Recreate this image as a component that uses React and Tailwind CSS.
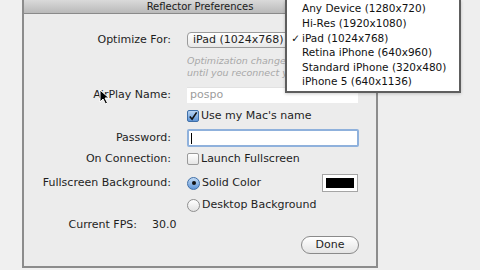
const menuItems = [
  { label: "Any Device (1280x720)" },
  { label: "Hi-Res (1920x1080)" },
  { label: "iPad (1024x768)", checked: true },
  { label: "Retina iPhone (640x960)" },
  { label: "Standard iPhone (320x480)" },
  { label: "iPhone 5 (640x1136)" },
];

function Checkbox({ checked }) {
  return (
    <span
      className={
        "w-[12px] h-[12px] rounded-[2px] border flex items-center justify-center shrink-0 " +
        (checked
          ? "border-[#3f6fa8] bg-gradient-to-b from-[#b8d4f2] to-[#5f95d6]"
          : "border-[#9a9a9a] bg-gradient-to-b from-white to-[#e6e6e6]")
      }
    >
      {checked && (
        <svg width="11" height="11" viewBox="0 0 11 11">
          <path d="M2 5.5 L4.5 8.5 L9.5 1" fill="none" stroke="#111" strokeWidth="1.8" />
        </svg>
      )}
    </span>
  );
}

function Radio({ checked }) {
  return (
    <span
      className={
        "w-[13px] h-[13px] rounded-full border flex items-center justify-center shrink-0 " +
        (checked
          ? "border-[#3f6fa8] bg-gradient-to-b from-[#c2dbf5] to-[#5f95d6]"
          : "border-[#8f8f8f] bg-gradient-to-b from-white to-[#e2e2e2]")
      }
    >
      {checked && <span className="w-[4px] h-[4px] rounded-full bg-[#111]" />}
    </span>
  );
}

function Row({ label, children, className = "" }) {
  return (
    <div className={"flex items-center " + className}>
      <div className="w-[147px] shrink-0 text-right">{label}</div>
      <div className="ml-[16px] flex items-center flex-1">{children}</div>
    </div>
  );
}

export default function App() {
  return (
    <div
      className="relative w-[480px] h-[270px] overflow-hidden bg-[#f0f0f0] flex text-[11px] text-[#1e1e1e]"
      style={{ fontFamily: '"DejaVu Sans", "Liberation Sans", sans-serif' }}
    >
      <div className="w-[22px] shrink-0" />
      <div className="w-[356px] h-[268px] shrink-0 flex flex-col border-x-2 border-b-2 border-[#8c8c8c] bg-[#ececec]">
        <div className="h-[14px] shrink-0 flex items-center justify-center border-b border-[#8a8a8a] bg-gradient-to-b from-[#dadada] to-[#b9b9b9] text-[10px] text-[#1a1a1a]">
          Reflector Preferences
        </div>

        <div className="flex flex-col">
          <Row label="Optimize For:" className="mt-[18px] h-[16px]">
            <div className="h-[16px] w-[130px] rounded-[4px] border border-[#9b9b9b] bg-gradient-to-b from-white to-[#e8e8e8] flex items-center pl-[5px]">
              iPad (1024x768)
            </div>
          </Row>

          <div className="mt-[7px] ml-[163px] w-[98px] overflow-hidden whitespace-nowrap text-[9.5px] italic leading-[12px] text-[#a8a8a8]">
            <div>Optimization changes will</div>
            <div>until you reconnect your</div>
          </div>

          <Row label="AirPlay Name:" className="mt-[8px] h-[16px]">
            <div className="h-[16px] w-[171px] bg-white border-t border-[#e2e2e2] flex items-center pl-[3px] text-[#9c9c9c]">
              pospo
            </div>
          </Row>

          <Row label="" className="mt-[6px] h-[14px]">
            <Checkbox checked />
            <span className="ml-[2px]">Use my Mac's name</span>
          </Row>

          <Row label="Password:" className="mt-[6px] h-[18px]">
            <div className="h-[18px] w-[172px] bg-white border-2 border-[#8fb1dc] rounded-[2px] flex items-center pl-[2px]">
              <span className="w-px h-[11px] bg-black" />
            </div>
          </Row>

          <Row label="On Connection:" className="mt-[5px] h-[14px]">
            <Checkbox />
            <span className="ml-[2px]">Launch Fullscreen</span>
          </Row>

          <Row label="Fullscreen Background:" className="mt-[8px] h-[18px]">
            <Radio checked />
            <span className="ml-[2px]">Solid Color</span>
            <div className="ml-auto mr-[18px] w-[36px] h-[18px] border border-[#a5a5a5] bg-white p-[3px]">
              <div className="w-full h-full bg-black" />
            </div>
          </Row>

          <Row label="" className="mt-[6px] h-[14px]">
            <Radio />
            <span className="ml-[2px]">Desktop Background</span>
          </Row>

          <div className="mt-[6px] h-[14px] flex items-center">
            <div className="w-[113px] text-right">Current FPS:</div>
            <div className="ml-[15px]">30.0</div>
          </div>

          <div className="mt-[4px] flex justify-end pr-[17px]">
            <div className="w-[58px] h-[18px] rounded-full border border-[#8a8a8a] bg-gradient-to-b from-white to-[#e4e4e4] flex items-center justify-center">
              Done
            </div>
          </div>
        </div>
      </div>
      <div className="flex-1 bg-[#eeeeee]" />

      <div className="absolute left-[285px] top-0 w-[176px] h-[93px] bg-white border-2 border-t-0 border-[#5e5e5e] pt-[2px] shadow-[0_1px_3px_rgba(0,0,0,0.2)]">
        {menuItems.map((item) => (
          <div key={item.label} className="h-[14.6px] flex items-center text-[10.5px] text-[#111]">
            <span className="w-[15px] text-right pr-[2px]">{item.checked ? "✓" : ""}</span>
            <span>{item.label}</span>
          </div>
        ))}
      </div>

      <svg className="absolute left-[99px] top-[89px]" width="12" height="16" viewBox="0 0 12 16">
        <path d="M1 1 L1 13 L4 10 L6.5 15 L8.5 14 L6 9 L10 9 Z" fill="#000" stroke="#fff" strokeWidth="1" />
      </svg>
    </div>
  );
}
